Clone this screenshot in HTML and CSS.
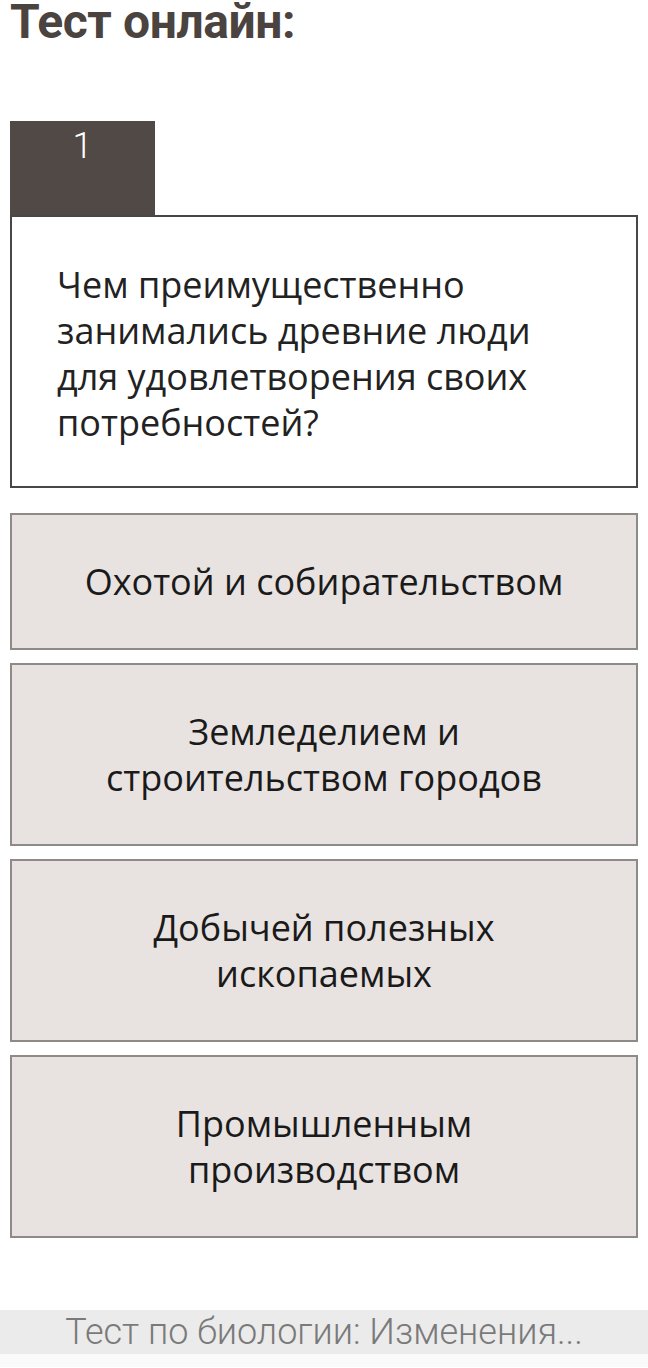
FILE: index.html
```html
<!DOCTYPE html>
<html lang="ru">
<head>
    <meta charset="UTF-8">
    <meta name="viewport" content="width=device-width, initial-scale=1.0">
    <title>Тест онлайн</title>
    <link rel="stylesheet" href="styles.css">
</head>
<body>
    <h1 class="title">Тест онлайн:</h1>
    <div class="quiz">
        <div class="tab">1</div>
        <div class="question">
            <p>Чем преимущественно занимались древние люди для удовлетворения своих потребностей?</p>
        </div>
        <div class="answers">
            <div class="answer">Охотой и собирательством</div>
            <div class="answer">Земледелием и<br>строительством городов</div>
            <div class="answer">Добычей полезных<br>ископаемых</div>
            <div class="answer">Промышленным<br>производством</div>
        </div>
    </div>
    <div class="footer">Тест по биологии: Изменения...</div>
    <div class="bottom"></div>
</body>
</html>
```
FILE: styles.css
```css
body { margin: 0; background: #fff; font-family: "Open Sans", "Noto Sans", sans-serif; }
.title { margin: -6px 10px 0; font-family: Roboto, sans-serif; font-weight: 700; font-size: 48px; line-height: 56px; letter-spacing: -0.4px; color: #4a4340; }
.quiz { margin: 71px 10px 0; }
.tab { width: 145px; height: 94px; background: #514945; color: #fff; font-family: Roboto, sans-serif; font-weight: 300; font-size: 36px; line-height: 50px; text-align: center; }
.question { border: 2px solid #474747; padding: 45px 45px 40px; background: #fff; }
.question p { margin: 0; font-size: 36px; line-height: 46px; color: #222; }
.answers { display: flex; flex-direction: column; gap: 13px; margin-top: 25px; }
.answer { border: 2px solid #8e8a88; background: #e8e3e1; padding: 44px 20px 43px; font-size: 36px; line-height: 46px; text-align: center; color: #1a1a1a; }
.footer { margin-top: 72px; height: 44px; background: #ebebeb; color: #7a7a7a; font-family: Roboto, sans-serif; font-weight: 300; font-size: 36px; line-height: 44px; text-align: center; }
.bottom { height: 13px; background: #fafafa; }
```
